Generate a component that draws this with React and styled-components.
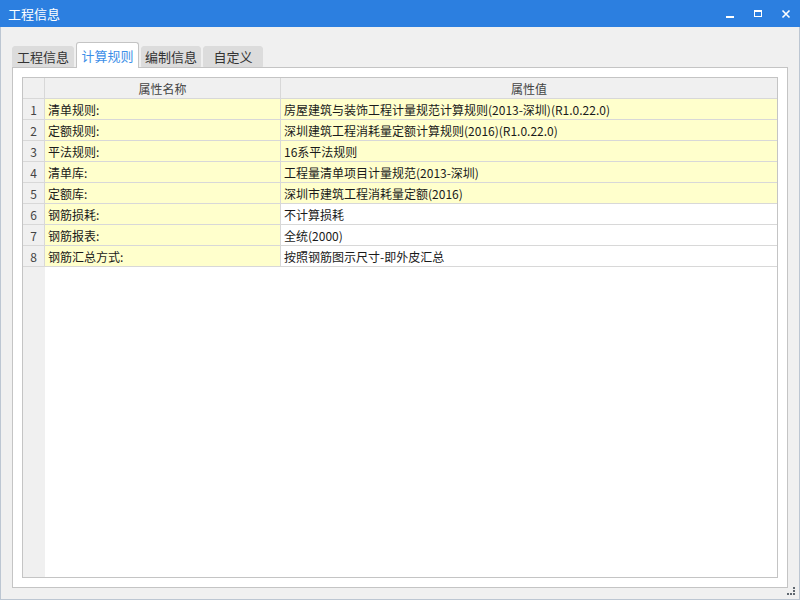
import React from "react";
import styled, { createGlobalStyle } from "styled-components";

const GlobalStyle = createGlobalStyle`
    html, body {
        margin: 0;
        padding: 0;
        background: #f0f0f0;
    }
    * {
        box-sizing: border-box;
    }
`

const Window = styled.div`
    position: relative;
    width: 800px;
    height: 600px;
    display: flex;
    flex-direction: column;
    background: #f0f0f0;
    border: 1px solid #bcc6d2;
    border-top: none;
    font-family: "Noto Sans CJK SC", "Microsoft YaHei", sans-serif;
    font-size: 12px;
    color: #222;
`

const TitleBar = styled.div`
    height: 27px;
    margin: 0 -1px;
    background: #2c7fe0;
    display: flex;
    align-items: center;
    justify-content: space-between;
    padding: 0 0 0 8px;
    color: #fff;
    font-size: 13px;
`

const Controls = styled.div`
    display: flex;
    align-items: center;
    height: 100%;
`

const ControlButton = styled.div`
    width: 28px;
    height: 100%;
    display: flex;
    align-items: center;
    justify-content: center;
`

const Body = styled.div`
    flex: 1;
    display: flex;
    flex-direction: column;
    padding: 15px 11px 11px 11px;
`

const TabStrip = styled.div`
    height: 25px;
    display: flex;
    align-items: flex-end;
    gap: 2px;
    position: relative;
    z-index: 1;
`

const Tab = styled.div`
    width: ${({ $w }) => $w}px;
    height: ${({ $active }) => ($active ? "26px" : "21px")};
    margin-bottom: ${({ $active }) => ($active ? "-1px" : "0")};
    display: flex;
    align-items: center;
    justify-content: center;
    background: ${({ $active }) => ($active ? "#fff" : "#dcdcdc")};
    border: 1px solid ${({ $active }) => ($active ? "#c4c4c4" : "#dcdcdc")};
    border-bottom: ${({ $active }) => ($active ? "none" : "1px solid #dcdcdc")};
    border-radius: 3px 3px 0 0;
    color: ${({ $active }) => ($active ? "#3d8fe8" : "#333")};
    font-size: 13px;
    white-space: nowrap;
`

const Panel = styled.div`
    flex: 1;
    display: flex;
    background: #fff;
    border: 1px solid #c4c4c4;
    padding: 9px;
`

const Table = styled.div`
    flex: 1;
    display: flex;
    flex-direction: column;
    border: 1px solid #c4c4c4;
`

const Row = styled.div`
    display: grid;
    grid-template-columns: 22px 236px 1fr;
    height: 21px;
    border-bottom: 1px solid #d8d8d8;
`

const Filler = styled.div`
    flex: 1;
    display: grid;
    grid-template-columns: 22px 1fr;
`

const Cell = styled.div`
    display: flex;
    align-items: center;
    justify-content: ${({ $center }) => ($center ? "center" : "flex-start")};
    padding: 0 ${({ $center }) => ($center ? "0" : "3px")};
    background: ${({ $bg }) => $bg || "#fff"};
    border-right: ${({ $last }) => ($last ? "none" : "1px solid #d8d8d8")};
    color: ${({ $muted }) => ($muted ? "#444" : "#1a1a1a")};
    white-space: nowrap;
    overflow: hidden;
`

const Grip = styled.div`
    position: absolute;
    right: 3px;
    bottom: 3px;
    width: 9px;
    height: 9px;
    display: grid;
    grid-template-columns: repeat(3, 3px);
    grid-template-rows: repeat(3, 3px);
`

const Dot = styled.span`
    width: 2px;
    height: 2px;
    background: ${({ $on }) => ($on ? "#606870" : "transparent")};
`

const rows = [
    { name: "清单规则:", value: "房屋建筑与装饰工程计量规范计算规则(2013-深圳)(R1.0.22.0)", yellow: true },
    { name: "定额规则:", value: "深圳建筑工程消耗量定额计算规则(2016)(R1.0.22.0)", yellow: true },
    { name: "平法规则:", value: "16系平法规则", yellow: true },
    { name: "清单库:", value: "工程量清单项目计量规范(2013-深圳)", yellow: true },
    { name: "定额库:", value: "深圳市建筑工程消耗量定额(2016)", yellow: true },
    { name: "钢筋损耗:", value: "不计算损耗", yellow: false },
    { name: "钢筋报表:", value: "全统(2000)", yellow: false },
    { name: "钢筋汇总方式:", value: "按照钢筋图示尺寸-即外皮汇总", yellow: false },
]

const tabs = [
    { label: "工程信息", w: 62 },
    { label: "计算规则", w: 63 },
    { label: "编制信息", w: 60 },
    { label: "自定义", w: 60 },
]

const gripDots = [0, 0, 1, 0, 0, 1, 1, 1, 1]

const App = () => {
    return (
        <>
        <GlobalStyle />
        <Window>
            <TitleBar>
                <span>工程信息</span>
                <Controls>
                    <ControlButton>
                        <svg width="10" height="10" viewBox="0 0 10 10">
                            <rect x="1" y="7" width="8" height="2" fill="#fff" />
                        </svg>
                    </ControlButton>
                    <ControlButton>
                        <svg width="10" height="10" viewBox="0 0 10 10">
                            <rect x="1.5" y="1.5" width="7" height="6" fill="none" stroke="#fff" strokeWidth="1" />
                            <rect x="1" y="1" width="8" height="2" fill="#fff" />
                        </svg>
                    </ControlButton>
                    <ControlButton>
                        <svg width="10" height="10" viewBox="0 0 10 10">
                            <path d="M1.5 1.5 L8.5 8.5 M8.5 1.5 L1.5 8.5" stroke="#fff" strokeWidth="1.6" />
                        </svg>
                    </ControlButton>
                </Controls>
            </TitleBar>
            <Body>
                <TabStrip>
                    {
                        tabs.map((t, i) => (
                            <Tab key={t.label} $active={i === 1} $w={t.w}>{t.label}</Tab>
                        ))
                    }
                </TabStrip>
                <Panel>
                    <Table>
                        <Row>
                            <Cell $bg="#f0f0f0" />
                            <Cell $bg="#f0f0f0" $center $muted>属性名称</Cell>
                            <Cell $bg="#f0f0f0" $center $muted $last>属性值</Cell>
                        </Row>
                        {
                            rows.map((r, i) => (
                                <Row key={r.name}>
                                    <Cell $bg="#f0f0f0" $center $muted>{i + 1}</Cell>
                                    <Cell $bg="#ffffcc">{r.name}</Cell>
                                    <Cell $bg={r.yellow ? "#ffffcc" : "#fff"} $last>{r.value}</Cell>
                                </Row>
                            ))
                        }
                        <Filler>
                            <Cell $bg="#f0f0f0" $last />
                            <Cell $last />
                        </Filler>
                    </Table>
                </Panel>
            </Body>
            <Grip>
                {gripDots.map((d, i) => <Dot key={i} $on={d} />)}
            </Grip>
        </Window>
        </>
    )
}

export default App
